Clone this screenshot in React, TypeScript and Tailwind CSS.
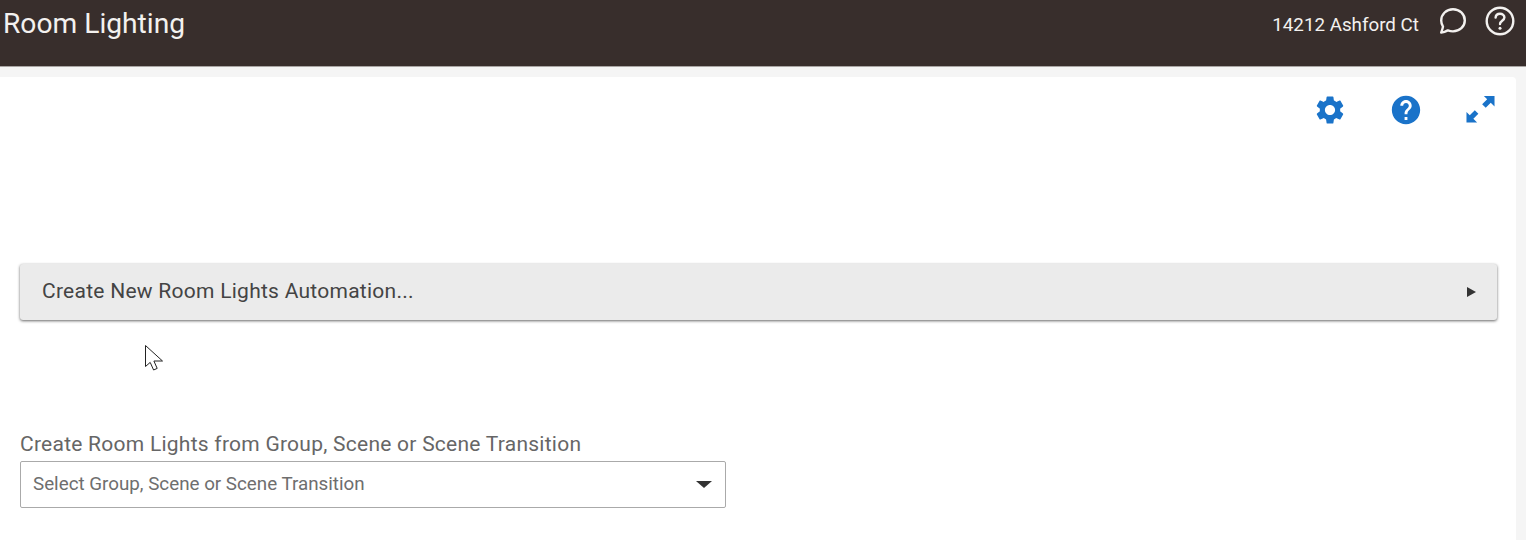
/*
 * Room Lighting page: dark title bar, white card with tool icons,
 * collapsed automation panel and a group/scene select.
 */
function GearIcon() {
  return (
    <svg viewBox="0 0 24 24" className="h-[34px] w-[34px] fill-[#1a73c9]">
      <path d="M19.14 12.94c.04-.3.06-.61.06-.94 0-.32-.02-.64-.07-.94l2.03-1.58c.18-.14.23-.41.12-.61l-1.92-3.32c-.12-.22-.37-.29-.59-.22l-2.39.96c-.5-.38-1.03-.7-1.62-.94l-.36-2.54c-.04-.24-.24-.41-.48-.41h-3.84c-.24 0-.43.17-.47.41l-.36 2.54c-.59.24-1.13.57-1.62.94l-2.39-.96c-.22-.08-.47 0-.59.22L2.74 8.87c-.12.21-.08.47.12.61l2.03 1.58c-.05.3-.09.63-.09.94s.02.64.07.94l-2.03 1.58c-.18.14-.23.41-.12.61l1.92 3.32c.12.22.37.29.59.22l2.39-.96c.5.38 1.03.7 1.62.94l.36 2.54c.05.24.24.41.48.41h3.84c.24 0 .44-.17.47-.41l.36-2.54c.59-.24 1.13-.56 1.62-.94l2.39.96c.22.08.47 0 .59-.22l1.92-3.32c.12-.22.07-.47-.12-.61l-2.01-1.58zM12 15.6c-1.98 0-3.6-1.62-3.6-3.6s1.62-3.6 3.6-3.6 3.6 1.62 3.6 3.6-1.62 3.6-3.6 3.6z" />
    </svg>
  );
}

function HelpIcon() {
  return (
    <svg viewBox="0 0 24 24" className="h-[34px] w-[34px] fill-[#1a73c9]">
      <path d="M12 2C6.48 2 2 6.48 2 12s4.48 10 10 10 10-4.48 10-10S17.52 2 12 2zm1 17h-2v-2h2v2zm2.07-7.75l-.9.92C13.45 12.9 13 13.5 13 15h-2v-.5c0-1.1.45-2.1 1.17-2.83l1.24-1.26c.37-.36.59-.86.59-1.41 0-1.1-.9-2-2-2s-2 .9-2 2H8c0-2.21 1.79-4 4-4s4 1.79 4 4c0 .88-.36 1.68-.93 2.25z" />
    </svg>
  );
}

function ExpandIcon() {
  return (
    <svg viewBox="0 0 30 30" className="-mt-[2px] h-[29px] w-[29px] fill-[#1a73c9]">
      <path d="M18.5 1H29.5V12L25.6 8.1L20.4 13.3L16.7 9.6L21.9 4.4Z" />
      <path d="M0.5 17.5V28.5H11.5L7.6 24.6L12.8 19.4L9.1 15.7L3.9 20.9Z" />
    </svg>
  );
}

// speech bubble with the tail pointing down-left, as in the title bar
function ChatIcon() {
  return (
    <svg viewBox="0 0 28 28" fill="none" className="h-[28px] w-[28px] stroke-[#f3f1ef]" strokeWidth="2.4" strokeLinejoin="round">
      <path d="M2.2 25.6C3 23.4 3.7 21.4 4 19.6C2.8 17.8 2.2 15.8 2.2 13.6C2.2 7.2 7.4 2.2 14 2.2C20.6 2.2 25.8 7.2 25.8 13.4C25.8 19.6 20.6 24.4 14 24.4C12.2 24.4 10.4 24 8.8 23.4C6.8 24.6 4.6 25.4 2.2 25.6Z" />
    </svg>
  );
}

function HeaderHelpIcon() {
  return (
    <svg viewBox="0 0 30 30" fill="none" className="h-[30px] w-[30px] stroke-[#f3f1ef]" strokeWidth="2.4" strokeLinecap="round">
      <circle cx="15" cy="15" r="13.3" />
      <path d="M10.6 11.6C10.8 9.2 12.6 7.8 15 7.8C17.6 7.8 19.4 9.4 19.4 11.6C19.4 14.6 15 15 15 18" />
      <path d="M15 22.2V22.3" strokeWidth="3" />
    </svg>
  );
}

function Cursor() {
  return (
    <svg viewBox="0 0 20 30" className="absolute left-[145px] top-[345px] h-[30px] w-[20px]">
      <path
        d="M0.5 0.5V21.5L5.2 17.4L8.6 25L12.2 23.4L8.9 16H17.5Z"
        className="fill-white stroke-[#222222]"
        strokeWidth="1"
      />
    </svg>
  );
}

export default function App() {
  return (
    <div className="relative h-[540px] w-[1526px] overflow-hidden bg-[#f5f5f5] font-['Roboto',sans-serif]">
      {/* Title bar */}
      <header className="flex h-[67px] items-start justify-between border-b border-[#a9a5a3] bg-[#382e2c] text-[#f3f1ef]">
        <h1 className="ml-[3px] mt-[7px] text-[28.2px] leading-[34px]">Room Lighting</h1>
        <div className="mr-[11px] mt-[6px] flex items-start">
          <span className="mt-[1px] text-[18.8px] leading-[36px]">14212 Ashford Ct</span>
          <div className="ml-[20px] mt-[1px]">
            <ChatIcon />
          </div>
          <div className="ml-[18px]">
            <HeaderHelpIcon />
          </div>
        </div>
      </header>

      {/* Card */}
      <main className="mr-[10px] mt-[10px] h-[480px] rounded-tr bg-white">
        <div className="flex items-center justify-end pr-[21px] pt-[16px]">
          <GearIcon />
          <div className="ml-[42px]">
            <HelpIcon />
          </div>
          <div className="ml-[43px]">
            <ExpandIcon />
          </div>
        </div>

        <div className="ml-[20px] mr-[19px] mt-[137px] flex h-[56px] items-center justify-between rounded-[3px] bg-[#ebebeb] pl-[22px] pr-[21px] shadow-[0_1px_3px_rgba(0,0,0,0.6)]">
          <span className="text-[21px] tracking-[0.26px] text-[#444444]">
            Create New Room Lights Automation...
          </span>
          <span className="h-0 w-0 border-y-[5px] border-l-[9px] border-y-transparent border-l-[#333333]" />
        </div>

        <div className="ml-[20px] mt-[111px] w-[706px]">
          <div className="text-[21px] leading-[26px] tracking-[0.25px] text-[#666666]">
            Create Room Lights from Group, Scene or Scene Transition
          </div>
          <div className="mt-[4px] flex h-[47px] items-center justify-between rounded-[2px] border border-[#aaaaaa] pl-[12px] pr-[13px]">
            <span className="text-[18.8px] text-[#6e6e6e]">Select Group, Scene or Scene Transition</span>
            <span className="h-0 w-0 border-x-[8px] border-t-[7px] border-x-transparent border-t-[#333333]" />
          </div>
        </div>
      </main>

      <Cursor />
    </div>
  );
}
